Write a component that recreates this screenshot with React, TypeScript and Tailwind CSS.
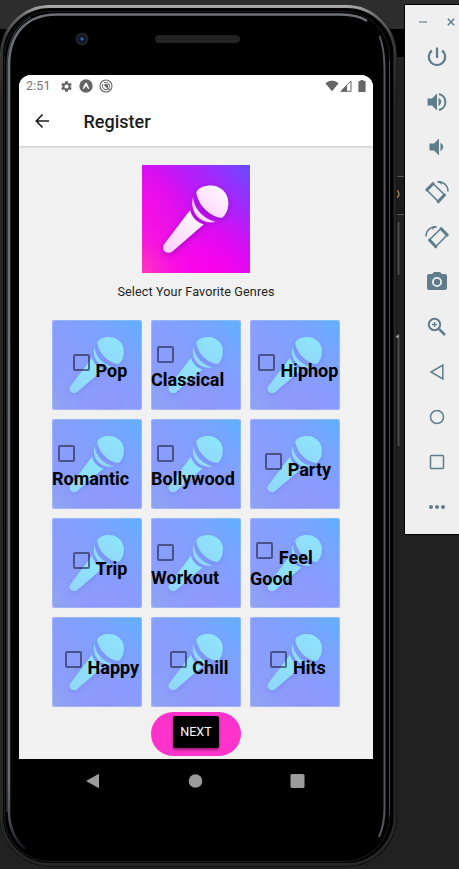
import React from "react";

type Genre = { name: string; layout: "row" | "stack" | "wrap"; wide?: boolean };

const genres: Genre[] = [
  { name: "Pop", layout: "row" },
  { name: "Classical", layout: "stack" },
  { name: "Hiphop", layout: "row" },
  { name: "Romantic", layout: "stack" },
  { name: "Bollywood", layout: "stack" },
  { name: "Party", layout: "row" },
  { name: "Trip", layout: "row" },
  { name: "Workout", layout: "stack" },
  { name: "Feel Good", layout: "wrap" },
  { name: "Happy", layout: "row", wide: true },
  { name: "Chill", layout: "row" },
  { name: "Hits", layout: "row" },
];

function MicArt({ tile = false }: { tile?: boolean }) {
  const id = tile ? "tile" : "logo";
  return (
    <svg viewBox="0 0 108 108" className="block size-full">
      <defs>
        <linearGradient id={id + "-bg"} x1="0" y1="1" x2="1" y2="0">
          <stop offset="0" stopColor={tile ? "#8fa5f0" : "#ff36bd"} />
          <stop offset="0.22" stopColor={tile ? "#8c9efa" : "#f416de"} />
          <stop offset="0.5" stopColor={tile ? "#849ffd" : "#d010f4"} />
          <stop offset="0.75" stopColor={tile ? "#7aa4fd" : "#a826fb"} />
          <stop offset="1" stopColor={tile ? "#5fb0fd" : "#654dff"} />
        </linearGradient>
        <radialGradient id={id + "-glow"} cx="0.62" cy="1" r="0.6">
          <stop offset="0" stopColor={tile ? "#8f98fc" : "#fb00ef"} />
          <stop offset="1" stopColor={tile ? "#8f98fc" : "#fb00ef"} stopOpacity="0" />
        </radialGradient>
        <radialGradient id={id + "-side"} cx="0" cy="0.4" r="0.5">
          <stop offset="0" stopColor={tile ? "#8b9dfd" : "#f80ce6"} stopOpacity="0.8" />
          <stop offset="1" stopColor={tile ? "#8b9dfd" : "#f80ce6"} stopOpacity="0" />
        </radialGradient>
        <linearGradient id={id + "-mic"} x1="0.8" y1="0" x2="0.1" y2="1">
          <stop offset="0" stopColor={tile ? "#8de6fc" : "#fffaff"} />
          <stop offset="1" stopColor={tile ? "#92d6f9" : "#ffcffb"} />
        </linearGradient>
        <filter id={id + "-shadow"} x="-30%" y="-30%" width="160%" height="160%">
          <feDropShadow dx="0" dy="2" stdDeviation="3" floodColor={tile ? "#5868dd" : "#7000a0"} floodOpacity={tile ? 0.35 : 0.6} />
        </filter>
      </defs>
      <rect width="108" height="108" fill={`url(#${id}-bg)`} />
      <rect width="108" height="108" fill={`url(#${id}-glow)`} />
      <rect width="108" height="108" fill={`url(#${id}-side)`} />
      <g fill={`url(#${id}-mic)`} filter={`url(#${id}-shadow)`}>
        <path d="M54.3 27C57 22.5 62.5 20.5 68.5 20.5C78.5 20.5 86.3 28 86.3 38C86.3 44 84 49.500 80 52.700C71 53 56 42 54.300 27Z" />
        <path d="M51 32.500C52 45 63 54.500 73.300 56.700C62 60 47 50 51 32.500Z" />
        <path d="M48 45.300C49.500 51.500 54.500 57.500 61.700 59.300L30 86.700C25 90 18.500 85 22 79.500Z" />
      </g>
    </svg>
  );
}

function Checkbox() {
  return (
    <span className="w-[28.8px] shrink-0 pl-[6px]">
      <span className="block size-[17px] rounded-[2px] border-2 border-[#202040]/60" />
    </span>
  );
}

function GenreTile({ genre }: { genre: Genre }) {
  const [first, second] = genre.name.split(" ");
  return (
    <div className="grid size-[90px] bg-[#f3c8f4]">
      <div className="col-start-1 row-start-1 size-[90px] overflow-hidden rounded-[3px]">
        <MicArt tile />
      </div>
      <div className="z-10 col-start-1 row-start-1 size-[90px] rounded-[3px] border border-white/20" />
      <div className="z-20 col-start-1 row-start-1 h-[90px] w-[90px] text-[18px] leading-[21px] font-bold whitespace-nowrap text-black">
        {genre.layout === "row" && (
          <div className={genre.wide ? "flex justify-center pt-[34px] pl-[4px]" : "flex justify-center pt-[34px]"}>
            <Checkbox />
            <span className="pt-[6px]">{genre.name}</span>
          </div>
        )}
        {genre.layout === "stack" && (
          <div className="flex flex-col pt-[26px]">
            <Checkbox />
            <span className="pt-[6px]">{genre.name}</span>
          </div>
        )}
        {genre.layout === "wrap" && (
          <div className="flex flex-col pt-[24px]">
            <div className="flex">
              <Checkbox />
              <span className="pt-[5px]">{first}</span>
            </div>
            <span>{second}</span>
          </div>
        )}
      </div>
    </div>
  );
}

function StatusBar() {
  return (
    <div className="flex h-[22px] items-center pr-[7px] pl-[7px] text-[#666]">
      <span className="w-[34px] text-[12.5px] leading-none tracking-[0.1px] text-[#757575]">2:51</span>
      <svg className="size-[13px]" viewBox="0 0 24 24" fill="currentColor">
        <path d="M19.400 13a7 7 0 0 0 0-2l2.300-1.700-2.300-4-2.700 1.100a8 8 0 0 0-1.700-1L14.600 2.500H9.400L9 5.400a8 8 0 0 0-1.700 1L4.600 5.300l-2.300 4L4.600 11a7 7 0 0 0 0 2l-2.300 1.700 2.300 4 2.700-1.100a8 8 0 0 0 1.700 1l.4 2.900h5.200l.4-2.900a8 8 0 0 0 1.700-1l2.700 1.100 2.300-4zM12 15.800a3.800 3.800 0 1 1 0-7.600 3.800 3.800 0 0 1 0 7.600z" />
      </svg>
      <svg className="ml-[6px] size-[14px]" viewBox="0 0 14 14">
        <circle cx="7" cy="7" r="6.700" fill="currentColor" />
        <path d="M3.700 9.600L6.100 4.300Q7 3 7.900 4.300L10.300 9.600L9.300 10L7 7L4.700 10Z" fill="#fff" />
      </svg>
      <svg className="ml-[6px] size-[14px]" viewBox="0 0 14 14" fill="none" stroke="currentColor">
        <circle cx="7" cy="7" r="6" strokeWidth="1.100" />
        <path d="M3.800 5A4 4 0 0 0 9.500 10.200M5 3.700A4 4 0 0 1 10.500 8.500" strokeWidth="1" />
        <path d="M5.500 6L10.500 10.500" strokeWidth="1.200" />
        <path d="M5.200 5.500Q7 3.800 8.700 5.500T8.500 8.600Z" fill="currentColor" stroke="none" />
      </svg>
      <svg className="ml-auto h-[12px] w-[14px]" viewBox="0 0 14 12" fill="currentColor">
        <path d="M.3 3.300Q7-2.300 13.700 3.300L7 11.300Z" />
      </svg>
      <svg className="ml-px h-[12px] w-[12px]" viewBox="0 0 12 12" fill="none" stroke="currentColor">
        <path d="M1 11.300L11 1V11.300Z" strokeWidth="1" />
        <path d="M.5 11.500L7 5V11.500Z" fill="currentColor" stroke="none" />
      </svg>
      <svg className="ml-[6px] h-[12px] w-[8px]" viewBox="0 0 8 12" fill="currentColor">
        <path d="M2.500 0h3v1H7a.6.6 0 0 1 .6.6v9.800a.6.6 0 0 1-.6.6H1a.6.6 0 0 1-.6-.6V1.600A.6.600 0 0 1 1 1h1.500z" />
      </svg>
    </div>
  );
}

function PhoneShell() {
  return (
    <svg className="absolute inset-0" width="405" height="869" viewBox="0 0 405 869" fill="none">
      <defs>
        <linearGradient id="rim" gradientUnits="userSpaceOnUse" x1="0" y1="5" x2="0" y2="100">
          <stop offset="0" stopColor="#b0b0b0" />
          <stop offset="0.1" stopColor="#707070" />
          <stop offset="0.35" stopColor="#3a3a3a" />
          <stop offset="1" stopColor="#272727" />
        </linearGradient>
        <linearGradient id="inner" gradientUnits="userSpaceOnUse" x1="0" y1="14" x2="0" y2="850">
          <stop offset="0" stopColor="#6c7077" />
          <stop offset="0.92" stopColor="#6a6b71" />
          <stop offset="0.97" stopColor="#42464b" />
          <stop offset="1" stopColor="#101214" />
        </linearGradient>
      </defs>
      <rect x="0" y="5" width="397" height="861.500" rx="50" fill="#000" />
      <rect x="1.500" y="6.500" width="393.500" height="858" rx="48.500" stroke="url(#rim)" strokeWidth="3" />
      <rect x="4.500" y="11.500" width="385" height="850" rx="45" stroke="#1e1e1e" strokeWidth="1" />
      <path d="M25 849C14 839 9 828 9 812V66C9 35 25 14.500 57 14.500H340C352 14.500 360 16 367 21" stroke="url(#inner)" strokeWidth="2.500" />
      <path d="M7 812V66C7 42 16 25 31 17" stroke="#85868d" strokeOpacity="0.55" strokeWidth="1" />
      <path d="M379.500 36C383 45 384.500 55 384.500 69V808C384.500 820 383 828 379 837" stroke="#55575d" strokeWidth="2" />
      <path d="M389.500 60V815" stroke="#494949" strokeWidth="1" />
      <circle cx="82" cy="39" r="6.500" fill="#202226" />
      <circle cx="82" cy="39" r="4" fill="#10152c" />
      <circle cx="82" cy="39" r="1.700" fill="#34589b" />
      <rect x="155" y="35" width="85" height="8" rx="4" fill="#202221" />
      <path d="M159 38H236M158 41H237" stroke="#303232" strokeWidth="1" strokeDasharray="1 2" />
      <path d="M398.500 222V275M398.500 334V446" stroke="#494949" strokeWidth="2" />
      <circle cx="397.500" cy="336.500" r="1.300" fill="#aaa" />
    </svg>
  );
}

function ToolbarIcon({ children }: { children: React.ReactNode }) {
  return (
    <span className="flex h-[45px] items-center justify-center">
      <svg className="size-6" viewBox="0 0 24 24" fill="none" stroke="#607d8b" strokeWidth="2">
        {children}
      </svg>
    </span>
  );
}

function RotateGlyph() {
  return (
    <>
      <path d="M8 3.500L19.500 14.800L13.200 21.500L1.800 10Z" strokeWidth="1.600" strokeLinejoin="round" />
      <path d="M1.900 9.900L7.900 3.700M13.200 21.700L19.500 15" strokeWidth="3" strokeLinecap="round" />
      <path d="M12.500 2.300C17.500 .8 23 5 23 11.500" strokeWidth="1.500" />
      <path d="M12 1H16L17 5Z" fill="#607d8b" stroke="none" />
    </>
  );
}

function EmulatorToolbar() {
  return (
    <aside className="mt-1 ml-[7px] flex h-[531px] w-[56px] shrink-0 flex-col border border-r-0 border-black bg-[#efefef] pl-[9px]">
      <div className="flex h-[29px] items-center justify-between pt-[5px] pr-[5px] pl-[5px]">
        <span className="h-[1.500px] w-[8px] bg-[#9db0ba]" />
        <svg width="8" height="8" viewBox="0 0 8 8" stroke="#607d8b" strokeWidth="1.500">
          <path d="M.8.8L7.200 7.200M7.200.8L.8 7.200" />
        </svg>
      </div>
      <ToolbarIcon>
        <path d="M12 2.500V13M6.800 5.500A8.200 8.200 0 1 0 17.200 5.500" strokeWidth="2.300" />
      </ToolbarIcon>
      <ToolbarIcon>
        <path d="M2.500 8.500H7L12 3.500V20.500L7 15.500H2.500Z" fill="#607d8b" stroke="none" />
        <path d="M13.500 7.500Q19 12 13.500 16.500Z" fill="#607d8b" stroke="none" />
        <path d="M14 4A8.200 8.200 0 0 1 14 20" />
      </ToolbarIcon>
      <ToolbarIcon>
        <path d="M4.500 8.500H9L14 3.500V20.500L9 15.500H4.500Z" fill="#607d8b" stroke="none" />
        <path d="M15.500 7.500Q21 12 15.500 16.500Z" fill="#607d8b" stroke="none" />
      </ToolbarIcon>
      <ToolbarIcon>
        <RotateGlyph />
      </ToolbarIcon>
      <ToolbarIcon>
        <g transform="translate(24 0) scale(-1 1)">
          <RotateGlyph />
        </g>
      </ToolbarIcon>
      <ToolbarIcon>
        <path fillRule="evenodd" d="M9 2L7.200 4H4a2 2 0 0 0-2 2V18a2 2 0 0 0 2 2H20a2 2 0 0 0 2-2V6a2 2 0 0 0-2-2H16.800L15 2ZM12 7a5 5 0 1 1 0 10a5 5 0 0 1 0-10ZM12 8.800a3.200 3.200 0 1 0 0 6.400a3.200 3.200 0 0 0 0-6.400Z" fill="#607d8b" stroke="none" />
      </ToolbarIcon>
      <ToolbarIcon>
        <circle cx="9.500" cy="9.500" r="5.700" />
        <path d="M14 14L20 20" strokeWidth="2.500" />
        <path d="M9.500 7V12M7 9.500H12" strokeWidth="1.300" />
      </ToolbarIcon>
      <ToolbarIcon>
        <path d="M17.800 5V19L6 12Z" strokeWidth="1.500" />
      </ToolbarIcon>
      <ToolbarIcon>
        <circle cx="12" cy="12" r="6.500" strokeWidth="1.500" />
      </ToolbarIcon>
      <ToolbarIcon>
        <rect x="5.500" y="5.500" width="13" height="13" rx="0.800" strokeWidth="1.500" />
      </ToolbarIcon>
      <ToolbarIcon>
        <g fill="#607d8b" stroke="none">
          <circle cx="6" cy="12" r="2" />
          <circle cx="12" cy="12" r="2" />
          <circle cx="18" cy="12" r="2" />
        </g>
      </ToolbarIcon>
    </aside>
  );
}

export default function App() {
  return (
    <div className="relative flex h-[869px] w-[459px] overflow-hidden bg-[#212121] font-[Roboto,sans-serif]">
      <div className="absolute inset-x-0 top-0 h-[29px] bg-[#2d2d2d]" />
      <div className="absolute inset-x-0 top-[29px] h-7 bg-black" />
      <div className="absolute top-[176px] left-[392px] h-[39px] w-[20px] border-y border-[#555] bg-[#1b1b1b] pt-[9px] text-[14px] leading-none text-[#a8845c]">o</div>
      <div className="relative h-[869px] w-[397px] shrink-0">
        <PhoneShell />
        <div className="relative flex h-full flex-col pt-[75px] pl-[19px]">
          <main className="flex h-[684px] w-[354px] flex-col overflow-hidden rounded-t-[12px] bg-[#f1f1f1]">
            <div className="h-[72px] shrink-0 border-b border-[#d8d8d8] bg-white shadow-[0_1px_1px_#e2e2e2]">
              <StatusBar />
              <div className="flex h-[49px] items-center pl-[16px]">
                <svg className="size-[15px]" viewBox="0 0 15 15" fill="none" stroke="#1c1c1e" strokeWidth="1.600">
                  <path d="M14 7H1.500M7.500 .5L1.300 7L7.500 13.500" />
                </svg>
                <h1 className="ml-[33.500px] text-[18px] leading-[21px] font-medium text-[#1c1c1e]">Register</h1>
              </div>
            </div>
            <div className="flex flex-col items-center">
              <div className="mt-[18px] size-[108px]">
                <MicArt />
              </div>
              <p className="mt-[11px] text-[12.600px] leading-[16px] tracking-[0.120px] text-[#222]">Select Your Favorite Genres</p>
              <div className="mt-[19.500px] grid grid-cols-3 gap-x-[9px] gap-y-[9.200px]">
                {genres.map((genre) => (
                  <GenreTile key={genre.name} genre={genre} />
                ))}
              </div>
              <div className="mt-[5px] flex h-[44px] w-[90px] justify-center rounded-full bg-[#ff33cc] pt-1">
                <button className="h-8 w-[46px] rounded-[2px] bg-black text-[12.600px] text-white shadow-[0_2px_3px_#0006]">NEXT</button>
              </div>
            </div>
          </main>
          <nav className="flex h-[44px] w-[354px] items-center pl-[67px]">
            <svg width="231" height="16" viewBox="0 0 231 16" fill="#9b9b9b">
              <path d="M0 8L13 .7V15.300Z" />
              <circle cx="109.500" cy="8" r="6.800" />
              <rect x="204.500" y="1" width="14" height="14" rx="1.500" />
            </svg>
          </nav>
        </div>
      </div>
      <div className="relative flex">
        <EmulatorToolbar />
      </div>
    </div>
  );
}
